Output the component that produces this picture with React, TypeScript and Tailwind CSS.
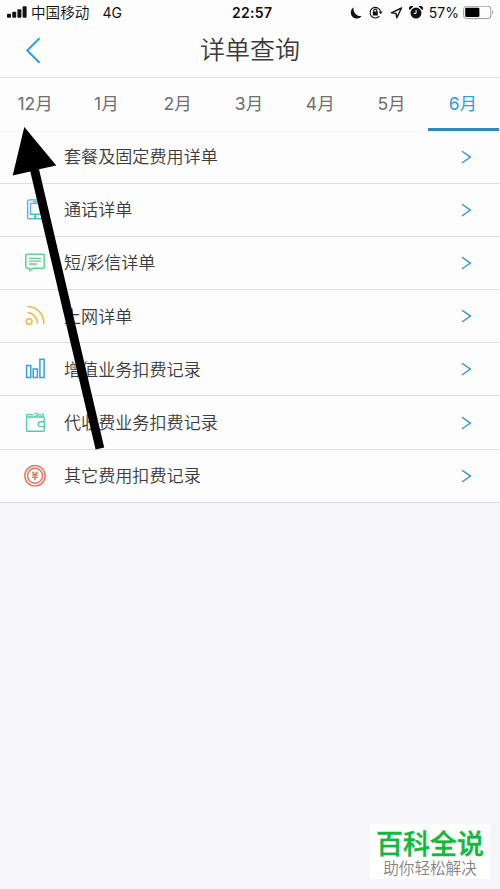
import type { ReactNode } from 'react';

type Detail = {
  label: string;
  icon: ReactNode;
};

const months = ['12月', '1月', '2月', '3月', '4月', '5月', '6月'];
const activeMonth = '6月';

const PhoneIcon = () => (
  <svg width="22" height="22" viewBox="0 0 22 22" fill="none" stroke="#4fb9d8" strokeWidth="1.4">
    <rect x="3.6" y="0.9" width="16" height="18.8" rx="1.8" />
    <path d="M6.5 4.4h10v10.8h-10z" />
    <path d="M9 2.6h4" />
    <circle cx="11.2" cy="17.4" r="0.8" fill="#4fb9d8" />
  </svg>
);

const MessageIcon = () => (
  <svg width="22" height="22" viewBox="0 0 22 22" fill="none" stroke="#5fd48a" strokeWidth="1.5" strokeLinejoin="round">
    <path d="M2.8 2.2h16.4a1 1 0 0 1 1 1v12a1 1 0 0 1-1 1H9.2l-3.6 2.6v-2.6H2.8a1 1 0 0 1-1-1v-12a1 1 0 0 1 1-1z" />
    <path d="M5 6.4h12M5 9.2h12M5 12h8" strokeWidth="1.3" />
  </svg>
);

const FeedIcon = () => (
  <svg width="22" height="22" viewBox="0 0 22 22" fill="none" stroke="#f2b64c" strokeWidth="1.5">
    <circle cx="5.2" cy="16.5" r="2.8" />
    <path d="M3.5 7.8c5.5 0 10 4.8 10 10.9" />
    <path d="M3.2 1.6c9.5 0 16.8 7.2 16.8 17.1" />
  </svg>
);

const ChartIcon = () => (
  <svg width="22" height="22" viewBox="0 0 22 22" fill="none" stroke="#3aa0dc" strokeWidth="1.5">
    <path d="M2.6 7.4h4.2v12H2.6zM9.2 10.9h4.2v8.5H9.2zM15.9 1.3h4.2v18.1h-4.2z" />
  </svg>
);

const WalletIcon = () => (
  <svg width="22" height="22" viewBox="0 0 22 22" fill="none" stroke="#4cd3a3" strokeWidth="1.4" strokeLinejoin="round">
    <path d="M20.2 9.8V6a1 1 0 0 0-1-1H3.4M20.2 14.6v3.7a1 1 0 0 1-1 1H3.6a1 1 0 0 1-1-1V3.4a1 1 0 0 1 1-1h4M17.4 2.4h1.9v2.3" />
    <path d="M5.5 4.8l7.4-4 2.4 3.8M10 4.7l5.8-2.8 1.6 2.9" strokeWidth="1" />
    <path d="M20.5 9.8h-3.9a2.4 2.4 0 0 0 0 4.8h3.9z" />
  </svg>
);

const CoinIcon = () => (
  <svg width="22" height="22" viewBox="0 0 22 22" fill="none" stroke="#e8735b" strokeWidth="1.4">
    <circle cx="11" cy="10.7" r="10.2" />
    <circle cx="11" cy="10.7" r="7.5" />
    <path d="M8.4 6.7L11 10l2.6-3.3M11 10v5M8 10.1h6M8 12.4h6" strokeWidth="1.4" />
  </svg>
);

const details: Detail[] = [
  { label: '套餐及固定费用详单', icon: null },
  { label: '通话详单', icon: <PhoneIcon /> },
  { label: '短/彩信详单', icon: <MessageIcon /> },
  { label: '上网详单', icon: <FeedIcon /> },
  { label: '增值业务扣费记录', icon: <ChartIcon /> },
  { label: '代收费业务扣费记录', icon: <WalletIcon /> },
  { label: '其它费用扣费记录', icon: <CoinIcon /> },
];

function StatusBar() {
  return (
    <div className="relative flex h-[25px] items-center justify-between pl-[7px] pr-[5px] text-[#111]">
      <div className="flex items-center">
        <svg width="20" height="13" viewBox="0 0 20 13" fill="#111">
          <rect x="0" y="7.8" width="4" height="4" rx="1" />
          <rect x="5.2" y="5.8" width="4" height="6" rx="1" />
          <rect x="10.4" y="3.3" width="4" height="8.5" rx="1" />
          <rect x="15.6" y="0.2" width="4" height="11.6" rx="1" />
        </svg>
        <span className="ml-[4px] pt-[2px] text-[14.6px] font-[350] leading-none">中国移动</span>
        <span className="ml-[13px] text-[14px] leading-none">4G</span>
      </div>
      <span className="absolute left-[232px] top-[5px] text-[14px] font-semibold leading-[15px] tracking-[0.3px]">22:57</span>
      <div className="flex items-center">
        <svg width="12" height="12" viewBox="0 0 12 12" fill="#111">
          <path d="M3.7.3A6 6 0 1 0 11.8 8.7C7.2 9.9 2.6 5.6 3.7.3z" />
        </svg>
        <svg className="ml-[7px]" width="14" height="13" viewBox="0 0 14 13" fill="none" stroke="#111" strokeWidth="1.1">
          <path d="M10.4 10.2A5.3 5.3 0 1 1 11.6 5.4" />
          <path d="M9.8 5.6h3.8l-1.9 2.6z" fill="#111" stroke="none" />
          <rect x="3.8" y="5.6" width="5" height="4" rx="0.4" fill="#111" stroke="none" />
          <path d="M4.8 6V4.6a1.5 1.5 0 0 1 3 0V6" />
        </svg>
        <svg className="ml-[7px]" width="13" height="12" viewBox="0 0 13 12" fill="none" stroke="#111" strokeWidth="1.4" strokeLinejoin="round">
          <path d="M11.5 1L1.4 5.8l4.6.6.8 4.4z" />
        </svg>
        <svg className="ml-[6px]" width="14" height="13" viewBox="0 0 14 13" fill="#111">
          <circle cx="7" cy="7.1" r="5.5" />
          <path d="M.7 4A2.4 2.4 0 0 1 4.4.6zM13.3 4A2.4 2.4 0 0 0 9.6.6z" />
          <path d="M7.1 4v3.3H4.7" fill="none" stroke="#fff" strokeWidth="1" />
        </svg>
        <span className="ml-[6px] text-[14px] leading-none">57%</span>
        <svg className="ml-[4px]" width="32" height="14" viewBox="0 0 32 14" fill="none">
          <rect x="0.6" y="0.2" width="27.2" height="12.4" rx="3" stroke="#999" strokeWidth="1" />
          <rect x="2.2" y="1.8" width="14.2" height="9.2" rx="1.3" fill="#000" />
          <path d="M29.3 4.4c1.4.5 1.4 3.5 0 4z" fill="#999" />
        </svg>
      </div>
    </div>
  );
}

function DetailRow({ label, icon }: Detail) {
  return (
    <li className="flex h-[53.2px] items-center border-b border-[#dedee1] pl-[24px] pr-[28px]">
      <span className="w-[22px]">{icon}</span>
      <span className="ml-[18px] flex-1 text-[17.1px] font-[350] leading-none text-[#3c3c3e]">{label}</span>
      <svg width="12" height="14" viewBox="0 0 12 14" fill="none" stroke="#3795c9" strokeWidth="1.4">
        <path d="M2 1.2l8.4 5.9L2 13" />
      </svg>
    </li>
  );
}

export default function App() {
  return (
    <div className="relative h-[889px] w-[500px] overflow-hidden bg-[#f6f5f9] font-['Inter','Noto_Sans_CJK_SC',sans-serif]">
      <div className="bg-[#fdfdfd]">
        <StatusBar />

        {/* Title bar */}
        <header className="relative flex h-[53px] items-center justify-center border-b border-[#e6e6e8] pb-[2px]">
          <svg className="absolute left-[25px] top-[12px]" width="17" height="27" viewBox="0 0 17 27" fill="none" stroke="#2f9de0" strokeWidth="2">
            <path d="M14.5 1.2L2.2 13.5l12.3 12.3" />
          </svg>
          <h1 className="text-[25px] font-[350] leading-none text-[#3c3c3e]">详单查询</h1>
        </header>

        {/* Month tabs */}
        <nav className="flex h-[54px] border-b border-[#f3f3f4] pr-[1px]">
          {months.map((month) => (
            <button
              key={month}
              className={
                month === activeMonth
                  ? 'flex-1 border-b-[3px] border-[#3186b8] pr-[1px] pt-[2px] text-[17.5px] font-[380] text-[#2f9de0]'
                  : 'flex-1 border-b-[3px] border-transparent pr-[1px] pt-[2px] text-[17.5px] font-[380] text-[#6f6f6f]'
              }
            >
              {month}
            </button>
          ))}
        </nav>

        <ul className="-mt-[1.5px]">
          {details.map((detail) => (
            <DetailRow key={detail.label} {...detail} />
          ))}
        </ul>
      </div>

      {/* Arrow pointing at the first month */}
      <svg className="pointer-events-none absolute left-0 top-[120px]" width="120" height="335" viewBox="0 120 120 335">
        <path d="M24.3 127L56.3 165.5 39 169.3 104.2 447.5 95.6 449.5 30.3 171.4 12.7 175.5z" fill="#000" />
      </svg>

      {/* Site badge */}
      <div className="absolute left-[370px] top-[824px] flex h-[55px] w-[120px] flex-col items-center bg-white">
        <span className="mt-[7px] text-[27px] font-medium leading-[28px] text-[#12b83c] [-webkit-text-stroke:0.4px_#12b83c]">百科全说</span>
        <span className="mt-[2px] text-[15.6px] font-[350] leading-[16px] text-[#858585]">助你轻松解决</span>
      </div>
    </div>
  );
}
